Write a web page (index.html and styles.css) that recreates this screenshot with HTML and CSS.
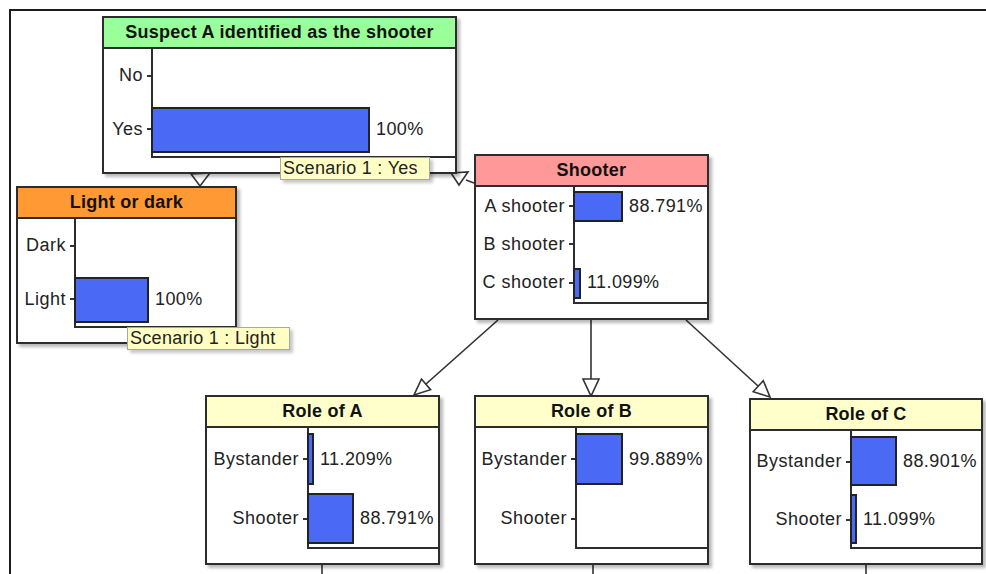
FILE: index.html
```html
<!DOCTYPE html>
<html lang="en">
<head>
  <meta charset="UTF-8" />
  <title>Shooter network</title>
  <link rel="stylesheet" href="styles.css">
</head>
<body>
  <div class="canvas">
    <!-- links between nodes, drawn in page coordinates -->
    <svg class="links" viewBox="11 11 975 563" width="975" height="563">
      <g class="edge">
        <polygon points="191,174 210,173 200,186" />
        <polygon points="451,173 468,172 459,185" />
        <line x1="466" y1="180" x2="474" y2="183" />
        <line x1="498" y1="320" x2="426" y2="384" />
        <polygon points="421.4,379.1 430.6,389.7 414,395" />
        <line x1="591" y1="320" x2="591" y2="379" />
        <polygon points="583,379 599,379 591,396" />
        <line x1="686" y1="320" x2="758" y2="386" />
        <polygon points="753.1,391.7 763.3,380.7 770,397" />
        <line x1="322" y1="565" x2="322" y2="574" />
        <line x1="593" y1="565" x2="593" y2="574" />
        <line x1="866" y1="565" x2="866" y2="574" />
      </g>
    </svg>

    <div class="node n-suspect">
      <div class="node-head">Suspect A identified as the shooter</div>
      <div class="node-body">
        <div class="states"><span>No</span><span>Yes</span></div>
        <div class="chart">
          <div class="row"></div>
          <div class="row"><span class="bar" style="width: 219px"></span><span class="pct">100%</span></div>
        </div>
      </div>
    </div>

    <div class="node n-light">
      <div class="node-head">Light or dark</div>
      <div class="node-body">
        <div class="states"><span>Dark</span><span>Light</span></div>
        <div class="chart">
          <div class="row"></div>
          <div class="row"><span class="bar" style="width: 75px"></span><span class="pct">100%</span></div>
        </div>
      </div>
    </div>

    <div class="node n-shooter">
      <div class="node-head">Shooter</div>
      <div class="node-body">
        <div class="states"><span>A shooter</span><span>B shooter</span><span>C shooter</span></div>
        <div class="chart">
          <div class="row"><span class="bar" style="width: 50px"></span><span class="pct">88.791%</span></div>
          <div class="row"></div>
          <div class="row"><span class="bar" style="width: 8px"></span><span class="pct">11.099%</span></div>
        </div>
      </div>
    </div>

    <div class="node role n-role-a">
      <div class="node-head">Role of A</div>
      <div class="node-body">
        <div class="states"><span>Bystander</span><span>Shooter</span></div>
        <div class="chart">
          <div class="row"><span class="bar" style="width: 7px"></span><span class="pct">11.209%</span></div>
          <div class="row"><span class="bar" style="width: 47px"></span><span class="pct">88.791%</span></div>
        </div>
      </div>
    </div>

    <div class="node role n-role-b">
      <div class="node-head">Role of B</div>
      <div class="node-body">
        <div class="states"><span>Bystander</span><span>Shooter</span></div>
        <div class="chart">
          <div class="row"><span class="bar" style="width: 48px"></span><span class="pct">99.889%</span></div>
          <div class="row"></div>
        </div>
      </div>
    </div>

    <div class="node role n-role-c">
      <div class="node-head">Role of C</div>
      <div class="node-body">
        <div class="states"><span>Bystander</span><span>Shooter</span></div>
        <div class="chart">
          <div class="row"><span class="bar" style="width: 47px"></span><span class="pct">88.901%</span></div>
          <div class="row"><span class="bar" style="width: 7px"></span><span class="pct">11.099%</span></div>
        </div>
      </div>
    </div>

    <div class="tip tip-yes">Scenario 1 : Yes</div>
    <div class="tip tip-light">Scenario 1 : Light</div>
  </div>
</body>
</html>
```

FILE: styles.css
```css
body {
  margin: 0;
  overflow: hidden;
  background: #fff;
  font-family: "Liberation Sans", Arial, sans-serif;
  color: #222;
}
.canvas {
  position: relative;
  margin: 9px 0 0 9px;
  width: 975px;
  height: 563px;
  border-top: 2px solid #1c1c1c;
  border-left: 2px solid #1c1c1c;
  overflow: hidden;
}
.links {
  position: absolute;
  left: 0;
  top: 0;
}
.edge line {
  stroke: #333;
  stroke-width: 1.6;
}
.edge polygon {
  fill: #fff;
  stroke: #333;
  stroke-width: 1.6;
  stroke-linejoin: miter;
}

/* nodes */
.node {
  position: absolute;
  box-sizing: border-box;
  display: flex;
  flex-direction: column;
  background: #fff;
  border: 2px solid #2c2c2c;
  box-shadow: 3px 3px 3px rgb(0 0 0 / 0.28);
  --lab: 97px;
}
.node-head {
  box-sizing: border-box;
  height: 31px;
  flex: none;
  display: flex;
  align-items: center;
  justify-content: center;
  border-bottom: 2px solid #2c2c2c;
  font-size: 18px;
  font-weight: 700;
  letter-spacing: 0.25px;
  color: #111;
  white-space: nowrap;
}
.node-body {
  flex: 1;
  display: flex;
  padding-bottom: 14px;
}
.states {
  width: var(--lab);
  flex: none;
  display: flex;
  flex-direction: column;
  padding-bottom: 2px;
}
.states span {
  flex: 1;
  display: flex;
  align-items: center;
  justify-content: flex-end;
  font-size: 18px;
  letter-spacing: 0.5px;
  white-space: nowrap;
}
.states span::after {
  content: "";
  width: 4px;
  height: 2px;
  margin-left: 4px;
  background: #333;
}
.chart {
  flex: 1;
  display: flex;
  flex-direction: column;
  border-left: 2px solid #2c2c2c;
  border-bottom: 2px solid #2c2c2c;
}
.row {
  flex: 1;
  display: flex;
  align-items: center;
}
.bar {
  box-sizing: border-box;
  align-self: stretch;
  margin: 4px 0 3px -2px;
  background: #4a6af5;
  border: 2px solid #222;
}
.pct {
  margin-left: 6px;
  font-size: 18px;
  letter-spacing: 0.4px;
  white-space: nowrap;
}
.role .bar {
  margin: 5px 0 3px -2px;
}
.role .states span,
.role .pct {
  padding-top: 3px;
}

.n-suspect { left: 91px; top: 5px; width: 355px; height: 158px; --lab: 47px; }
.n-suspect .node-head { background: #99ff99; }
.n-light { left: 5px; top: 175px; width: 221px; height: 158px; --lab: 56px; }
.n-light .node-head { background: #ff9933; }
.n-shooter { left: 463px; top: 143px; width: 235px; height: 166px; --lab: 97px; }
.n-shooter .node-head { background: #ff9999; }
.role .node-head { background: #ffffcc; }
.n-role-a { left: 194px; top: 384px; width: 235px; height: 170px; --lab: 100px; }
.n-role-b { left: 463px; top: 384px; width: 235px; height: 170px; --lab: 99px; }
.n-role-c { left: 738px; top: 387px; width: 234px; height: 167px; --lab: 99px; }

/* scenario tooltips */
.tip {
  position: absolute;
  box-sizing: border-box;
  height: 23px;
  padding: 0 10px 0 2px;
  display: flex;
  align-items: center;
  background: #ffffc4;
  border: 1px solid #a8a8a0;
  box-shadow: 3px 3px 3px rgb(0 0 0 / 0.22);
  font-size: 18px;
  letter-spacing: 0.3px;
  white-space: nowrap;
}
.tip-yes { left: 269px; top: 146px; width: 150px; }
.tip-light { left: 116px; top: 316px; width: 163px; }
```
